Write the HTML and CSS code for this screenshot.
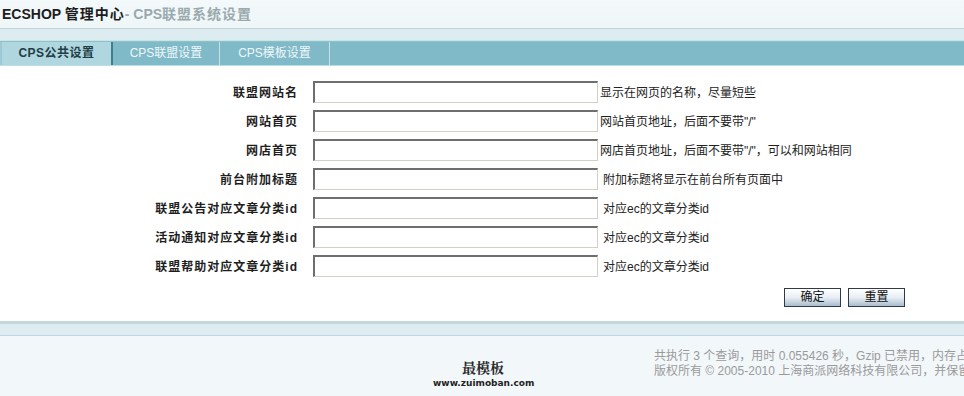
FILE: index.html
```html
<!DOCTYPE html>
<html lang="zh-CN">
<head>
 <meta charset="UTF-8">
 <title>ECSHOP 管理中心 - CPS联盟系统设置</title>
 <link rel="stylesheet" href="styles.css">
</head>
<body>

<div class="head">
 <span class="head-main">ECSHOP <span class="cjk">管理中心</span></span><span class="head-sub">- CPS<span class="cjk">联盟系统设置</span></span>
</div>
<div class="head-band"></div>

<div class="tabbar">
 <div class="tab active">CPS公共设置</div>
 <div class="tab">CPS联盟设置</div>
 <div class="tab">CPS模板设置</div>
</div>

<form class="setform">
 <div class="row">
  <label class="lbl">联盟网站名</label>
  <input class="txt" type="text">
  <span class="note">显示在网页的名称，尽量短些</span>
 </div>
 <div class="row">
  <label class="lbl">网站首页</label>
  <input class="txt" type="text">
  <span class="note">网站首页地址，后面不要带"/"</span>
 </div>
 <div class="row">
  <label class="lbl">网店首页</label>
  <input class="txt" type="text">
  <span class="note">网店首页地址，后面不要带"/"，可以和网站相同</span>
 </div>
 <div class="row">
  <label class="lbl">前台附加标题</label>
  <input class="txt" type="text">
  <span class="note pad">附加标题将显示在前台所有页面中</span>
 </div>
 <div class="row">
  <label class="lbl">联盟公告对应文章分类id</label>
  <input class="txt" type="text">
  <span class="note pad">对应ec的文章分类id</span>
 </div>
 <div class="row">
  <label class="lbl">活动通知对应文章分类id</label>
  <input class="txt" type="text">
  <span class="note pad">对应ec的文章分类id</span>
 </div>
 <div class="row">
  <label class="lbl">联盟帮助对应文章分类id</label>
  <input class="txt" type="text">
  <span class="note pad">对应ec的文章分类id</span>
 </div>
 <div class="btns">
  <button class="btn" type="submit">确定</button>
  <button class="btn" type="reset">重置</button>
 </div>
</form>

<div class="foot-band"></div>
<div class="foot">
 <div class="logo">
  <div class="logo-name">最模板</div>
  <div class="logo-url">www.zuimoban.com</div>
 </div>
 <div class="foot-info">
  <div>共执行 3 个查询，用时 0.055426 秒，Gzip 已禁用，内存占用 2.126 MB</div>
  <div>版权所有 © 2005-2010 上海商派网络科技有限公司，并保留所有权利。</div>
 </div>
</div>

</body>
</html>
```

FILE: styles.css
```css
html, body{
 margin: 0;
 padding: 0;
}

body{
 width: 964px;
 height: 396px;
 overflow: hidden;
 background: #fff;
 font-family: "Liberation Sans", "Noto Sans CJK SC", sans-serif;
 font-size: 12px;
 color: #222;
}

/* header */
.head{
 height: 28px;
 line-height: 28px;
 padding-left: 2px;
 background: linear-gradient(#f4f9fb, #eef6f8);
 border-bottom: 1px solid #c2d4d8;
 white-space: nowrap;
 font-size: 14px;
 font-weight: bold;
}
.head .cjk{
 letter-spacing: 1px;
}
.head-main{
 color: #1c1c1c;
}
.head-sub{
 color: #9aa9ad;
}
.head-band{
 height: 11px;
 background: #dcecf0;
 border-bottom: 1px solid #c6e6e0;
}

/* tabs */
.tabbar{
 display: flex;
 height: 23px;
 background: #80bac8;
 border-top: 1px solid #8fc0cc;
 border-bottom: 1px solid #b8dee6;
}
.tab{
 width: 106px;
 line-height: 23px;
 text-align: center;
 color: #eef7f9;
 border-right: 1px solid #c4e2ea;
 white-space: nowrap;
}
.tab:last-child{
 width: 109px;
}
.tab.active{
 width: 109px;
 border-left: 2px solid #9cc9d4;
 border-right: 2px solid #3e7e8e;
 background: #b0d6e0;
 color: #1f3e46;
 font-weight: bold;
 letter-spacing: 0.5px;
}

/* form */
.setform{
 box-sizing: border-box;
 height: 255px;
 padding-top: 11px;
}
.row{
 display: grid;
 grid-template-columns: 297px 285px auto;
 column-gap: 16px;
 align-items: center;
 height: 29px;
}
.lbl{
 text-align: right;
 font-weight: bold;
 color: #1e1e1e;
 letter-spacing: 1px;
 margin-right: -1px;
 white-space: nowrap;
}
.txt{
 box-sizing: border-box;
 width: 285px;
 height: 22px;
 margin: 0;
 padding: 1px 3px;
 border: 2px solid #d4d0c8;
 border-top-color: #6e6e6e;
 border-left-color: #6e6e6e;
 border-right-width: 1px;
 border-bottom-width: 1px;
 background: #fff;
 font: inherit;
}
.note{
 margin-left: -14px;
 color: #222;
 white-space: nowrap;
}
.note.pad{
 margin-left: -11px;
}
.btns{
 display: flex;
 justify-content: flex-end;
 gap: 7px;
 padding: 8px 59px 0 0;
}
.btn{
 width: 57px;
 height: 19px;
 padding: 0;
 border: 1px solid #2e3a46;
 background: linear-gradient(#ffffff, #e8eef4 50%, #a9bccd);
 font: inherit;
 color: #111;
 line-height: 17px;
 cursor: pointer;
}

/* footer */
.foot-band{
 height: 11px;
 background: #dcecf0;
 border-top: 3px solid #c4d8da;
 border-bottom: 1px solid #c0d8e4;
}
.foot{
 display: flex;
 align-items: flex-start;
 height: 60px;
 background: #f2f7fa;
 white-space: nowrap;
}
.logo{
 width: 100px;
 margin-left: 433px;
 padding-top: 22px;
 text-align: center;
}
.logo-name{
 font-family: "Noto Serif CJK SC", "Noto Sans CJK SC", serif;
 font-size: 14px;
 font-weight: bold;
 color: #2a2a2a;
 line-height: 18px;
}
.logo-url{
 font-family: "DejaVu Sans", sans-serif;
 font-size: 9px;
 font-weight: bold;
 color: #222;
 line-height: 14px;
}
.foot-info{
 margin-left: 121px;
 padding-top: 13px;
 color: #9a9a9a;
 line-height: 15px;
}
```
